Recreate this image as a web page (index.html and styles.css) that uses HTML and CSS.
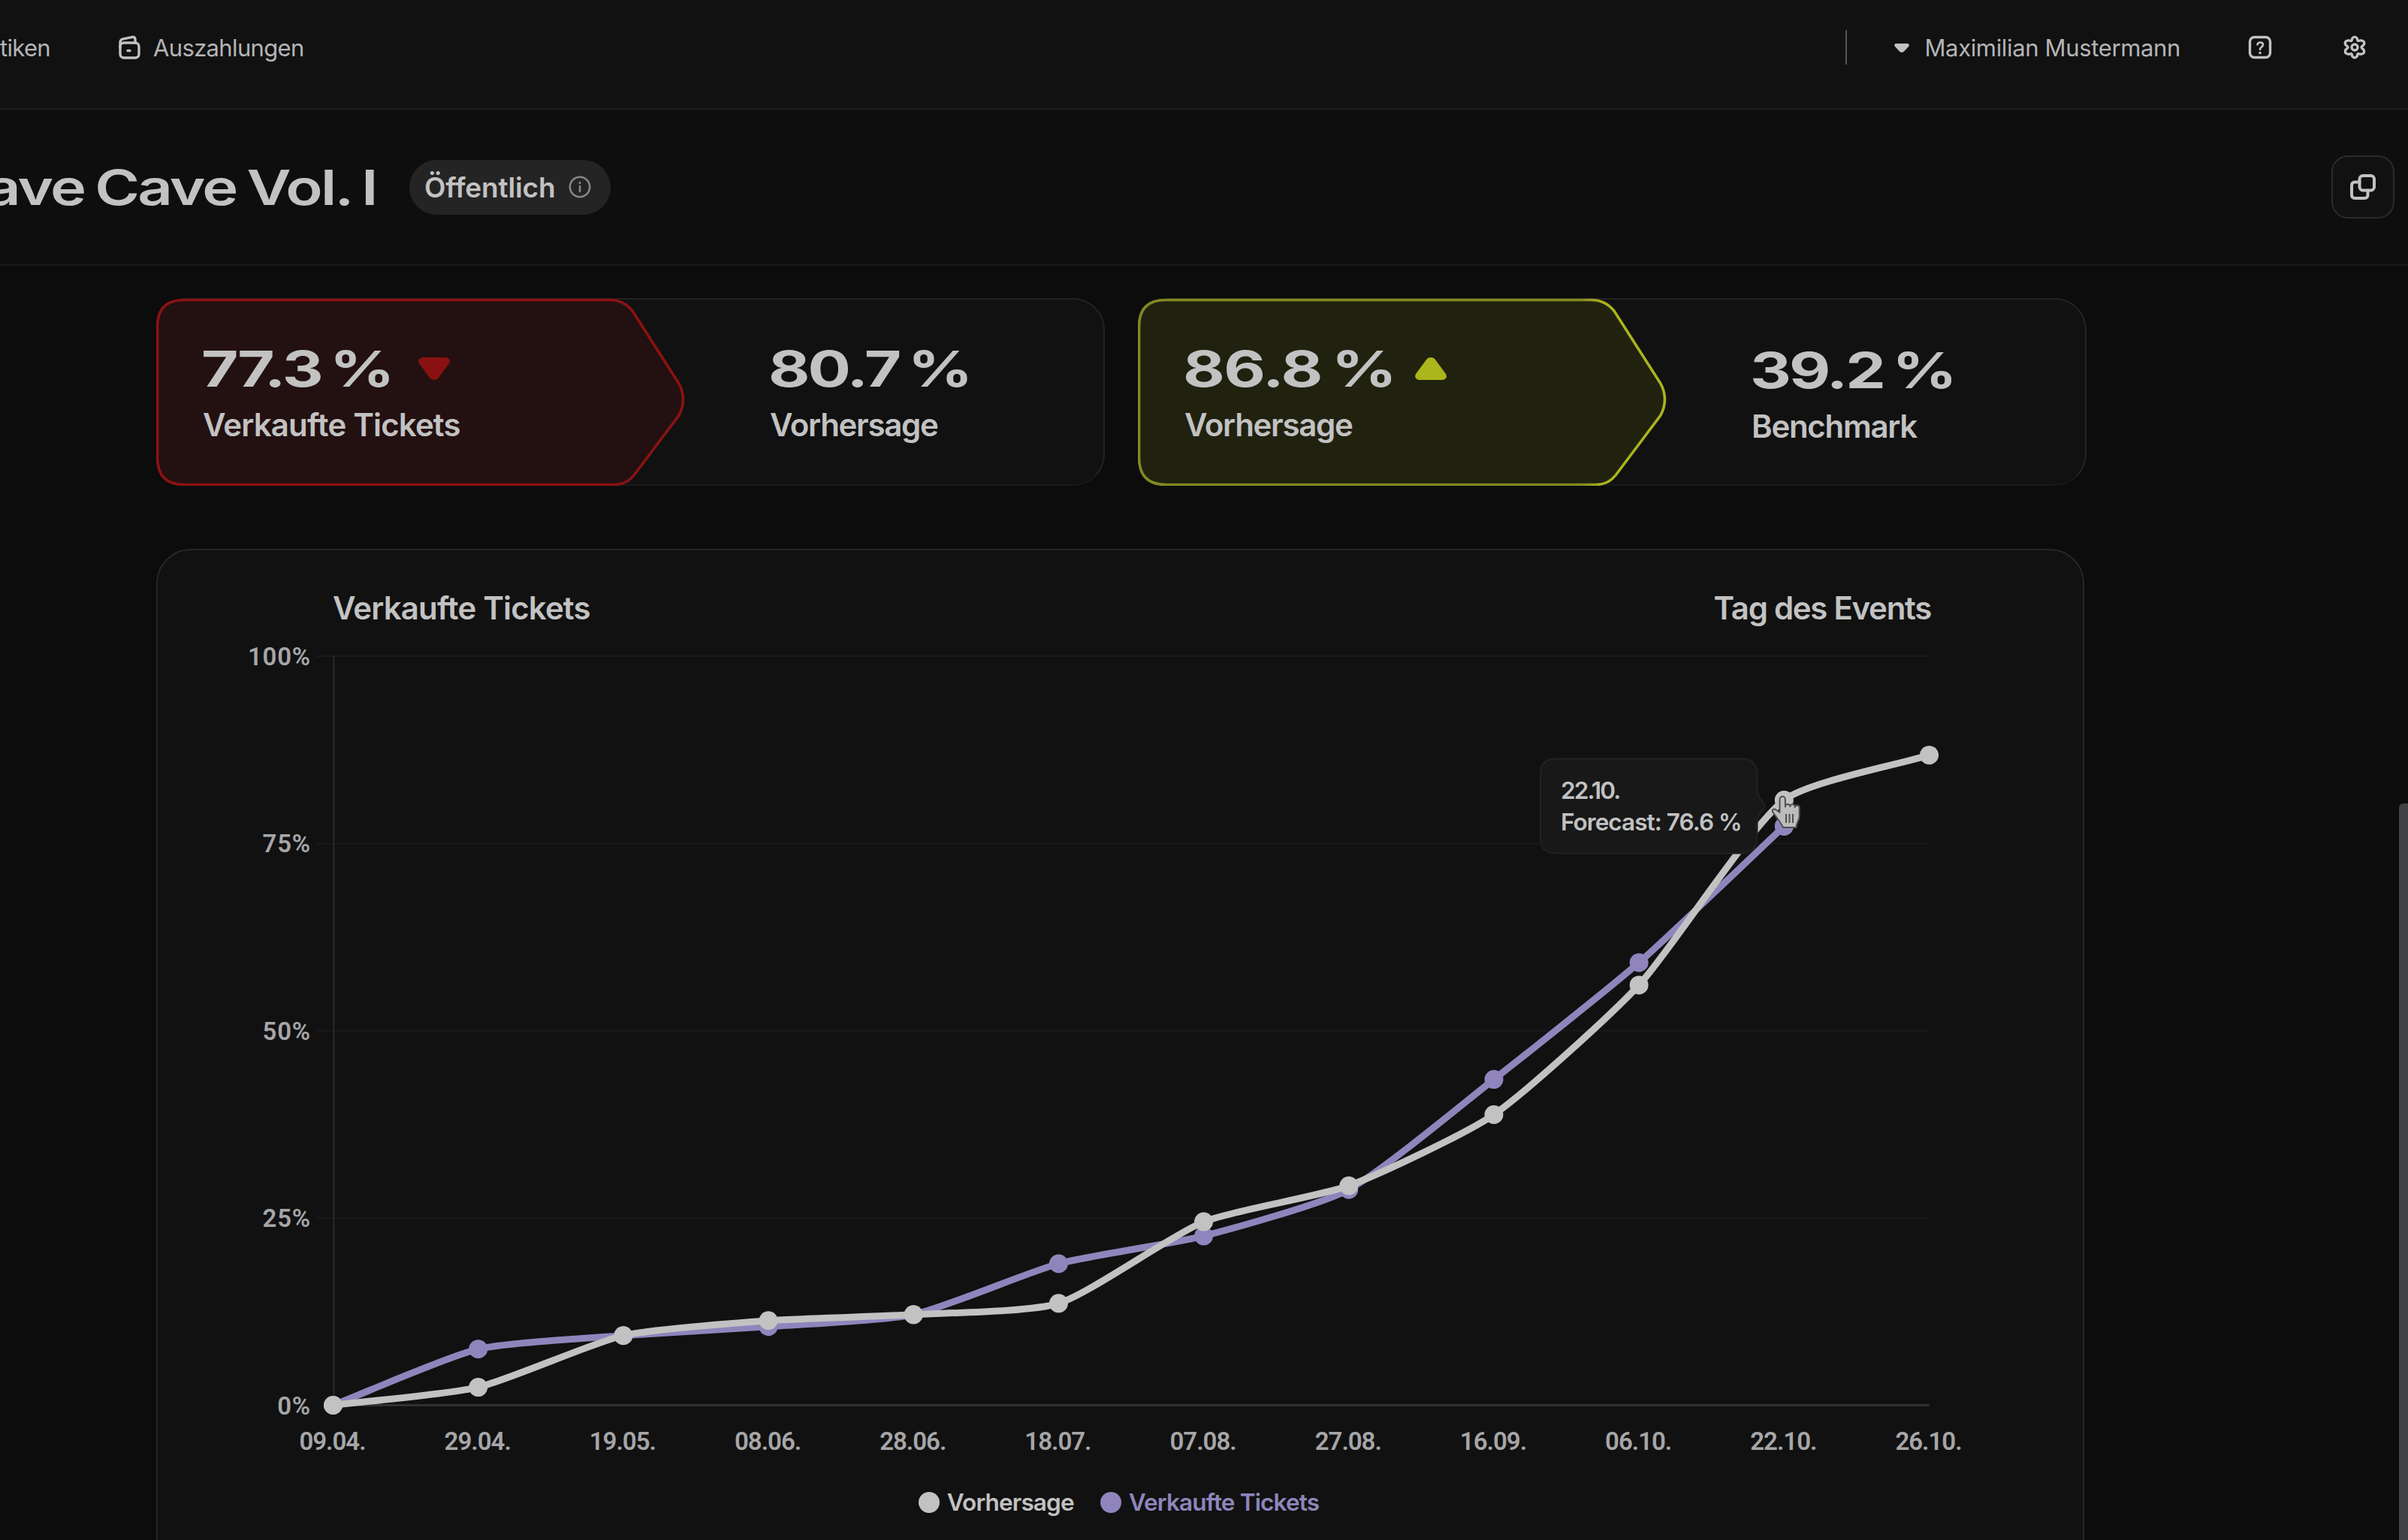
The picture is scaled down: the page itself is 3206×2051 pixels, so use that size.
FILE: index.html
```html
<!DOCTYPE html>
<html lang="de">
<head>
    <meta charset="UTF-8">
    <meta name="viewport" content="width=device-width, initial-scale=1.0">
    <title>Rave Cave Vol. I - Statistiken</title>
    <link rel="stylesheet" href="styles.css">
</head>
<body>

    <!-- Navigation -->
    <header class="topbar">
        <nav class="nav">
            <a class="nav-item nav-cut">Statistiken</a>
            <a class="nav-item">
                <svg class="icon" width="30" height="32" viewBox="0 0 30 32">
                    <rect x="2" y="10" width="25" height="20" rx="5"/>
                    <path d="M2 16V9.500C2 6.500 3 5.500 6 4.800L18 2.300Q22 1.800 22 5.500V10"/>
                    <path d="M12 20.500H15"/>
                </svg>
                Auszahlungen
            </a>
        </nav>
        <div class="account">
            <span class="divider"></span>
            <svg class="caret" width="22" height="13" viewBox="0 0 22 13"><path d="M3 1H19Q22 2 20 5L14 11.500Q11 14 8 11.500L2 5Q0 2 3 1Z"/></svg>
            <span class="user">Maximilian Mustermann</span>
            <svg class="icon help" width="32" height="32" viewBox="0 0 32 32">
                <rect x="2.500" y="2.500" width="27" height="27" rx="6"/>
                <path class="thin" d="M12.500 12.500C12.500 8.500 20 8.500 20 12.500C20 15.500 16 15.500 16 19"/>
                <circle class="dot" cx="16" cy="23.500" r="1.800"/>
            </svg>
            <svg class="icon gear" width="32" height="32" viewBox="-16 -16 32 32">
                <path d="M-3.300 -11.800Q0 -16 3.300 -11.800Q3.500 -8.300 5 -8.600Q6.800 -9.200 8.600 -9.100Q14.500 -8 12 -3.200Q9 -1 9 0Q9 1 12 3.200Q14.500 8 8.600 9.100Q6.800 9.200 5 8.600Q3.500 8.300 3.300 11.800Q0 16 -3.300 11.800Q-3.500 8.300 -5 8.600Q-6.800 9.200 -8.600 9.100Q-14.500 8 -12 3.200Q-9 1 -9 0Q-9 -1 -12 -3.200Q-14.500 -8 -8.600 -9.100Q-6.800 -9.200 -5 -8.600Q-3.500 -8.300 -3.300 -11.800Z"/>
                <circle r="4"/>
            </svg>
        </div>
    </header>

    <!-- Event-Titel -->
    <section class="titlebar">
        <div class="title-wrap"><h1>Rave Cave Vol. I</h1></div>
        <span class="status">
            Öffentlich
            <svg class="info" width="30" height="30" viewBox="0 0 30 30">
                <circle cx="15" cy="15" r="13.200"/>
                <path d="M15 14V21M15 9V10"/>
            </svg>
        </span>
        <button class="copy">
            <svg class="icon" width="34" height="34" viewBox="0 0 34 34">
                <rect x="12.500" y="2" width="19.500" height="19.500" rx="4.500"/>
                <path d="M12.500 10.500H6.500Q2 10.500 2 15V27.500Q2 32 6.500 32H19Q23.500 32 23.500 27.500V21.500"/>
            </svg>
        </button>
    </section>

    <main>
        <!-- Kennzahlen -->
        <div class="cards">
            <div class="card">
                <svg class="arrow-bg red" width="710" height="250" viewBox="0 0 710 250">
                    <path d="M37 2.500H604Q622 2.500 634 17L696 114Q707 135 696 156L636 236Q626 248.500 610 248.500H37Q1.500 248.500 1.500 212V38Q1.500 2.500 37 2.500Z"/>
                </svg>
                <div class="stat">
                    <div class="value"><b>77.3 %</b>
                        <svg class="trend down" width="42" height="30" viewBox="0 0 42 30"><path d="M5 0H37Q44 2 41 8L27 27Q25 30 21 30Q17 30 15 27L1 8Q-2 2 5 0Z"/></svg>
                    </div>
                    <div class="label">Verkaufte Tickets</div>
                </div>
                <div class="stat">
                    <div class="value"><b>80.7 %</b></div>
                    <div class="label tight">Vorhersage</div>
                </div>
            </div>
            <div class="card">
                <svg class="arrow-bg green" width="710" height="250" viewBox="0 0 710 250">
                    <defs>
                        <linearGradient id="edge">
                            <stop offset="0.840" stop-color="#838920"/>
                            <stop offset="0.880" stop-color="#aab31d"/>
                        </linearGradient>
                    </defs>
                    <path d="M37 2.500H604Q622 2.500 634 17L696 114Q707 135 696 156L636 236Q626 248.500 610 248.500H37Q1.500 248.500 1.500 212V38Q1.500 2.500 37 2.500Z"/>
                </svg>
                <div class="stat">
                    <div class="value wide"><b>86.8 %</b>
                        <svg class="trend up" width="42" height="30" viewBox="0 0 42 30"><path d="M5 30H37Q44 28 41 22L27 3Q25 0 21 0Q17 0 15 3L1 22Q-2 28 5 30Z"/></svg>
                    </div>
                    <div class="label tight">Vorhersage</div>
                </div>
                <div class="stat lower">
                    <div class="value"><b>39.2 %</b></div>
                    <div class="label tight">Benchmark</div>
                </div>
            </div>
        </div>

        <!-- Diagramm -->
        <div class="chart">
            <div class="chart-head">
                <span>Verkaufte Tickets</span>
                <span class="tight">Tag des Events</span>
            </div>
            <svg id="plot" width="2563" height="1100" viewBox="0 0 2563 1100"></svg>
            <div class="legend">
                <span class="legend-item forecast"><i></i>Vorhersage</span>
                <span class="legend-item sold"><i></i>Verkaufte Tickets</span>
            </div>

            <div class="tooltip">
                <svg class="tooltip-bg" width="304" height="132" viewBox="0 0 304 132">
                    <path d="M21 1.500H269Q289 1.500 289.500 22V38C289.500 52 293 54 298 60Q301 64 298 68C293 75 289.500 77 289.500 90V107Q289 127 269 127.500H21Q1 127 1 107V22Q1 1.500 21 1.500Z"/>
                </svg>
                <div class="tip-date">22.10.</div>
                <div>Forecast: 76.6 %</div>
            </div>
            <svg class="hand" width="42" height="46" viewBox="-1 -1 42 46">
                <path d="M11.500 22V4.500a3.700 3.700 0 0 1 7.400 0V14.500a3.200 3.200 0 0 1 6.400 -.500a3.200 3.200 0 0 1 6.400 1a3 3 0 0 1 6 1.500V27C37.500 34 33.500 35 33.500 42H16C13 35 8 30 2 21C1 17.500 5 16.500 7 19Z"/>
                <path d="M20 24V36M24.500 24V36M29 24V36"/>
            </svg>
        </div>
    </main>

    <div class="scrollbar"></div>

    <script>
        const dates = ["09.04.", "29.04.", "19.05.", "08.06.", "28.06.", "18.07.", "07.08.", "27.08.", "16.09.", "06.10.", "22.10.", "26.10."];
        const forecast = [0, 2.4, 9.3, 11.3, 12.1, 13.6, 24.5, 29.3, 38.8, 56.1, 80.8, 86.8];
        const sold = [0, 7.5, 9.3, 10.5, 12.1, 18.9, 22.6, 28.8, 43.5, 59.1, 77.3];

        // Maße der Zeichenfläche
        const left = 233.5, right = 2358.5, top0 = 24, bottom = 1021.5;
        const tension = 0.2;

        const px = i => left + i * (right - left) / (dates.length - 1);
        const py = v => bottom - v * (bottom - top0) / 100;

        // Geglättete Linie durch alle Punkte
        function linePath(values) {
            const p = values.map((v, i) => [px(i), py(v)]);
            const cp = p.map((cur, i) => {
                const a = p[i - 1] || cur, b = p[i + 1] || cur;
                const d1 = Math.hypot(cur[0] - a[0], cur[1] - a[1]);
                const d2 = Math.hypot(b[0] - cur[0], b[1] - cur[1]);
                const f1 = tension * d1 / (d1 + d2), f2 = tension * d2 / (d1 + d2);
                return {
                    before: [cur[0] - f1 * (b[0] - a[0]), cur[1] - f1 * (b[1] - a[1])],
                    after: [cur[0] + f2 * (b[0] - a[0]), cur[1] + f2 * (b[1] - a[1])]
                };
            });
            let d = "M" + p[0];
            for (let i = 1; i < p.length; i++) {
                d += "C" + cp[i - 1].after + " " + cp[i].before + " " + p[i];
            }
            return d;
        }

        function series(values, name) {
            const dots = values.map((v, i) => `<circle cx="${px(i)}" cy="${py(v)}" r="12.500"/>`).join("");
            return `<g class="series ${name}"><path d="${linePath(values)}"/>${dots}</g>`;
        }

        let out = "";
        [100, 75, 50, 25, 0].forEach(v => {
            out += `<line class="grid${v === 0 ? " base" : ""}" x1="${v === 0 ? left : left - 22}" x2="${right}" y1="${py(v)}" y2="${py(v)}"/>`;
            out += `<text class="tick percent" x="204" y="${py(v) + 12}" text-anchor="end">${v}%</text>`;
        });
        out += `<line class="axis" x1="${left + 1}" x2="${left + 1}" y1="${top0}" y2="${bottom}"/>`;
        dates.forEach((t, i) => {
            out += `<text class="tick" x="${px(i) - 1}" y="1081" text-anchor="middle">${t}</text>`;
        });
        out += series(sold, "sold") + series(forecast, "forecast");
        document.getElementById("plot").innerHTML = out;
    </script>

</body>
</html>
```
FILE: styles.css
```css
* {
    box-sizing: border-box;
}
body {
    margin: 0;
    height: 2051px;
    overflow: hidden;
    background-color: #0c0c0c;
    color: #c2c2c2;
    font-family: Inter, "Liberation Sans", sans-serif;
}
svg {
    display: block;
    flex: none;
}
.icon {
    fill: none;
    stroke: #c2c2c2;
    stroke-width: 3.4;
    stroke-linecap: round;
    stroke-linejoin: round;
}
.icon .thin {
    stroke-width: 2.6;
}
.icon .dot {
    fill: #c2c2c2;
    stroke: none;
}

/* Navigation */
.topbar {
    display: flex;
    justify-content: space-between;
    align-items: center;
    height: 146px;
    padding: 0 55px 18px 0;
    background-color: #111111;
    border-bottom: 2px solid #1e1e1e;
    font-size: 31px;
    color: #b4b4b6;
}
.nav,
.nav-item,
.account {
    display: flex;
    align-items: center;
}
.nav {
    gap: 91px;
}
.nav-item {
    gap: 16px;
    letter-spacing: -0.65px;
}
.nav-cut {
    width: 67px;
    justify-content: flex-end;
}
.divider {
    width: 2px;
    height: 46px;
    background-color: #555558;
}
.caret {
    margin: 0 19px 0 62px;
    fill: #c2c2c2;
}
.user {
    letter-spacing: -0.35px;
}
.help {
    margin: 0 94px 0 90px;
}

/* Event-Titel */
.titlebar {
    display: flex;
    align-items: center;
    height: 208px;
    padding-right: 18px;
    background-color: #0e0e0e;
    border-bottom: 2px solid #191919;
}
.title-wrap {
    display: flex;
    justify-content: flex-end;
    width: 501px;
}
h1 {
    margin: 0;
    flex: none;
    font-size: 65px;
    font-weight: 580;
    letter-spacing: -2.2px;
    word-spacing: -3px;
    transform: scaleX(1.25);
    transform-origin: right;
}
.status {
    display: flex;
    align-items: center;
    gap: 17px;
    height: 73px;
    margin-left: 44px;
    padding: 0 26px 0 20px;
    border-radius: 37px;
    background-color: #242424;
    font-size: 37px;
    font-weight: 580;
    letter-spacing: -0.15px;
}
.info {
    fill: none;
    stroke: #85858c;
    stroke-width: 2.6;
    stroke-linecap: round;
}
.copy {
    display: flex;
    align-items: center;
    justify-content: center;
    width: 84px;
    height: 84px;
    margin-left: auto;
    padding: 0;
    border: 2px solid #2c2c2c;
    border-radius: 22px;
    background-color: #111111;
}
.copy .icon {
    stroke-width: 4;
}

/* Kennzahlen */
main {
    padding: 43px 0 0 208px;
}
.cards {
    display: flex;
    gap: 44px;
}
.card {
    position: relative;
    display: grid;
    grid-template-columns: 755px 1fr;
    width: 1263px;
    height: 250px;
    padding: 62px 0 0 60px;
    border: 2px solid #232323;
    border-bottom-color: #181818;
    border-radius: 42px;
    background-color: #111111;
}
.arrow-bg {
    position: absolute;
    left: -2px;
    top: -2px;
    stroke-width: 3.6;
}
.arrow-bg.red {
    fill: #231011;
    stroke: #8c1212;
}
.arrow-bg.green {
    fill: #212110;
    stroke: url(#edge);
}
.stat {
    position: relative;
}
.stat.lower {
    padding-top: 2px;
}
.value {
    display: flex;
    align-items: center;
    height: 60px;
    margin-bottom: 20px;
}
.value b {
    margin: 0 92px 0 -2px;
    font-size: 66px;
    font-weight: 700;
    letter-spacing: -2.3px;
    word-spacing: -4.5px;
    transform: scaleX(1.29);
    transform-origin: left;
}
.value.wide b {
    margin-right: 91px;
    letter-spacing: -1.2px;
    transform: scaleX(1.3);
}
.trend.down {
    fill: #8a1111;
}
.trend.up {
    fill: #abb51c;
}
.label,
.chart-head {
    font-size: 42px;
    font-weight: 580;
    line-height: 50px;
    letter-spacing: -0.85px;
}
.tight {
    letter-spacing: -1.3px;
}

/* Diagramm */
.chart {
    position: relative;
    width: 2567px;
    height: 1400px;
    margin-top: 84px;
    border: 2px solid #262626;
    border-radius: 46px;
    background-color: #111111;
}
.chart-head {
    display: flex;
    justify-content: space-between;
    height: 117px;
    padding: 52px 202px 0 233px;
}
.grid {
    stroke: #1a1a1a;
    stroke-width: 2;
}
.grid.base {
    stroke: #313131;
    stroke-width: 3;
}
.axis {
    stroke: #2a2a2b;
    stroke-width: 2;
}
.tick {
    font: 600 33px Roboto, sans-serif;
    letter-spacing: -1px;
    fill: #a6a6a8;
}
.tick.percent {
    letter-spacing: 0.8px;
}
.series path {
    fill: none;
    stroke-width: 9;
    stroke-linecap: round;
}
.series.forecast {
    fill: #c2c2c2;
    stroke: #c2c2c2;
}
.series.sold {
    fill: #8f85bc;
    stroke: #8f85bc;
}
.series circle {
    stroke: none;
}
.legend {
    display: flex;
    justify-content: center;
    gap: 35px;
    height: 80px;
    padding: 31px 4px 0 0;
    font-size: 31.5px;
    font-weight: 600;
    line-height: 40px;
    letter-spacing: -0.85px;
}
.legend-item {
    display: flex;
    align-items: center;
    gap: 10px;
    height: 40px;
}
.legend-item i {
    width: 28px;
    height: 28px;
    border-radius: 50%;
    background-color: currentColor;
}
.legend-item.sold {
    color: #8f85bc;
}
.tooltip {
    position: absolute;
    left: 1840px;
    top: 276px;
    width: 304px;
    height: 132px;
    padding: 23px 0 0 28px;
    font-size: 31.5px;
    font-weight: 600;
    line-height: 42px;
    letter-spacing: -0.95px;
    white-space: nowrap;
}
.tooltip div {
    position: relative;
}
.tooltip .tip-date {
    letter-spacing: -1.9px;
}
.tooltip-bg {
    position: absolute;
    left: 0;
    top: 0;
    fill: #181818;
    stroke: #222222;
    stroke-width: 2;
}
.hand {
    position: absolute;
    left: 2147px;
    top: 326px;
    fill: #bdbdbd;
    stroke: #505052;
    stroke-width: 2;
    stroke-linejoin: round;
}

/* Scrollbalken am rechten Rand */
.scrollbar {
    position: absolute;
    right: 0;
    top: 1070px;
    width: 12px;
    height: 981px;
    border-radius: 6px 0 0 0;
    background-color: #424244;
}
```
